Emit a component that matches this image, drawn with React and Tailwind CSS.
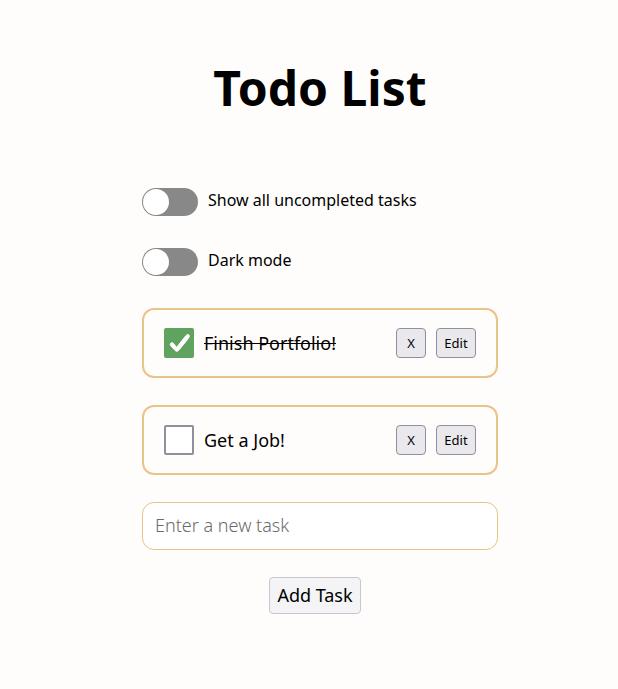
import { useState } from "react";

function Toggle({ id, label, checked, onChange }) {
  return (
    <div className="flex items-start gap-2.5">
      <input
        id={id}
        type="checkbox"
        role="switch"
        checked={checked}
        onChange={(e) => onChange(e.target.checked)}
        className="h-7 w-14 shrink-0 cursor-pointer appearance-none rounded-full bg-[#888888] p-px before:block before:size-[26px] before:rounded-full before:bg-white before:transition-transform checked:bg-[#5fa35f] checked:before:translate-x-7"
      />
      <label htmlFor={id} className="text-base/6">
        {label}
      </label>
    </div>
  );
}

function SmallButton({ children, className, ...rest }) {
  return (
    <button
      type="button"
      className={`h-[30px] cursor-pointer rounded-[4px] border border-[#8f8f9d] bg-[#e9e9ed] pt-0.5 text-[13px] ${className}`}
      {...rest}
    >
      {children}
    </button>
  );
}

function Task({ task, onToggle, onRemove }) {
  const id = `task-${task.id}`;
  return (
    <li className="flex items-center rounded-xl border-2 border-[#e9c48a] px-5 py-[18px]">
      <span className="mr-2.5 grid size-[30px] shrink-0">
        <input
          id={id}
          type="checkbox"
          checked={task.done}
          onChange={onToggle}
          className="peer col-start-1 row-start-1 size-[30px] cursor-pointer appearance-none rounded-[2px] border-2 border-[#8f8f9d] bg-white checked:border-[#5fa35f] checked:bg-[#5fa35f]"
        />
        <svg
          viewBox="0 0 30 30"
          fill="white"
          stroke="white"
          strokeWidth="1"
          strokeLinejoin="round"
          className="pointer-events-none invisible col-start-1 row-start-1 size-[30px] peer-checked:visible"
        >
          <path d="M6.2 16.2 Q6.4 15 7.8 14.7 Q9 14.6 9.7 15.7 L12.6 19.4 L21.6 8 Q22.8 6.4 24.4 6.6 Q25.8 6.9 25.2 8.6 Q24.8 10 23.8 11.2 L14.6 22.4 Q12.8 24.2 11.2 22.6 L6.9 17.9 Q6.1 17 6.2 16.2Z" />
        </svg>
      </span>
      <label htmlFor={id} className={`grow text-lg/6 ${task.done ? "line-through" : ""}`}>
        {task.text}
      </label>
      <div className="flex gap-2.5">
        <SmallButton className="w-[30px]" aria-label={`Delete ${task.text}`} onClick={onRemove}>
          X
        </SmallButton>
        <SmallButton className="w-10">Edit</SmallButton>
      </div>
    </li>
  );
}

export default function App() {
  const [onlyOpen, setOnlyOpen] = useState(false);
  const [dark, setDark] = useState(false);
  const [text, setText] = useState("");
  const [tasks, setTasks] = useState([
    { id: 1, text: "Finish Portfolio!", done: true },
    { id: 2, text: "Get a Job!", done: false },
  ]);

  const addTask = (e) => {
    e.preventDefault();
    if (!text.trim()) return;
    setTasks([...tasks, { id: Date.now(), text: text.trim(), done: false }]);
    setText("");
  };

  const visible = onlyOpen ? tasks.filter((t) => !t.done) : tasks;

  return (
    <div
      className={`min-h-screen pt-14 pb-10 pl-[22px] font-['Noto_Sans',sans-serif] ${
        dark ? "bg-[#222222] text-white" : "bg-[#fffdfb] text-black"
      }`}
    >
      <main className="mx-auto w-full max-w-[356px]">
        <h1 className="text-center text-5xl/[64px] font-bold">Todo List</h1>

        <div className="mt-[68px] flex flex-col gap-8">
          <Toggle id="uncompleted" label="Show all uncompleted tasks" checked={onlyOpen} onChange={setOnlyOpen} />
          <Toggle id="dark" label="Dark mode" checked={dark} onChange={setDark} />
        </div>

        <ul className="mt-8 flex flex-col gap-[27px]">
          {visible.map((task) => (
            <Task
              key={task.id}
              task={task}
              onToggle={() => setTasks(tasks.map((t) => (t.id === task.id ? { ...t, done: !t.done } : t)))}
              onRemove={() => setTasks(tasks.filter((t) => t.id !== task.id))}
            />
          ))}
        </ul>

        <form onSubmit={addTask} className="mt-[27px] flex flex-col items-center gap-[27px]">
          <input
            type="text"
            aria-label="New task"
            placeholder="Enter a new task"
            value={text}
            onChange={(e) => setText(e.target.value)}
            className="h-12 w-full rounded-xl border border-[#e9c48a] bg-white px-3 pb-0.5 text-lg font-light text-black placeholder:text-[#6b6b6b]"
          />
          <button
            type="submit"
            className="mr-2.5 h-[37px] w-[92px] cursor-pointer rounded-[4px] border border-[#c7c7ce] bg-[#f4f4f6] pb-0.5 text-lg text-black"
          >
            Add Task
          </button>
        </form>
      </main>
    </div>
  );
}
